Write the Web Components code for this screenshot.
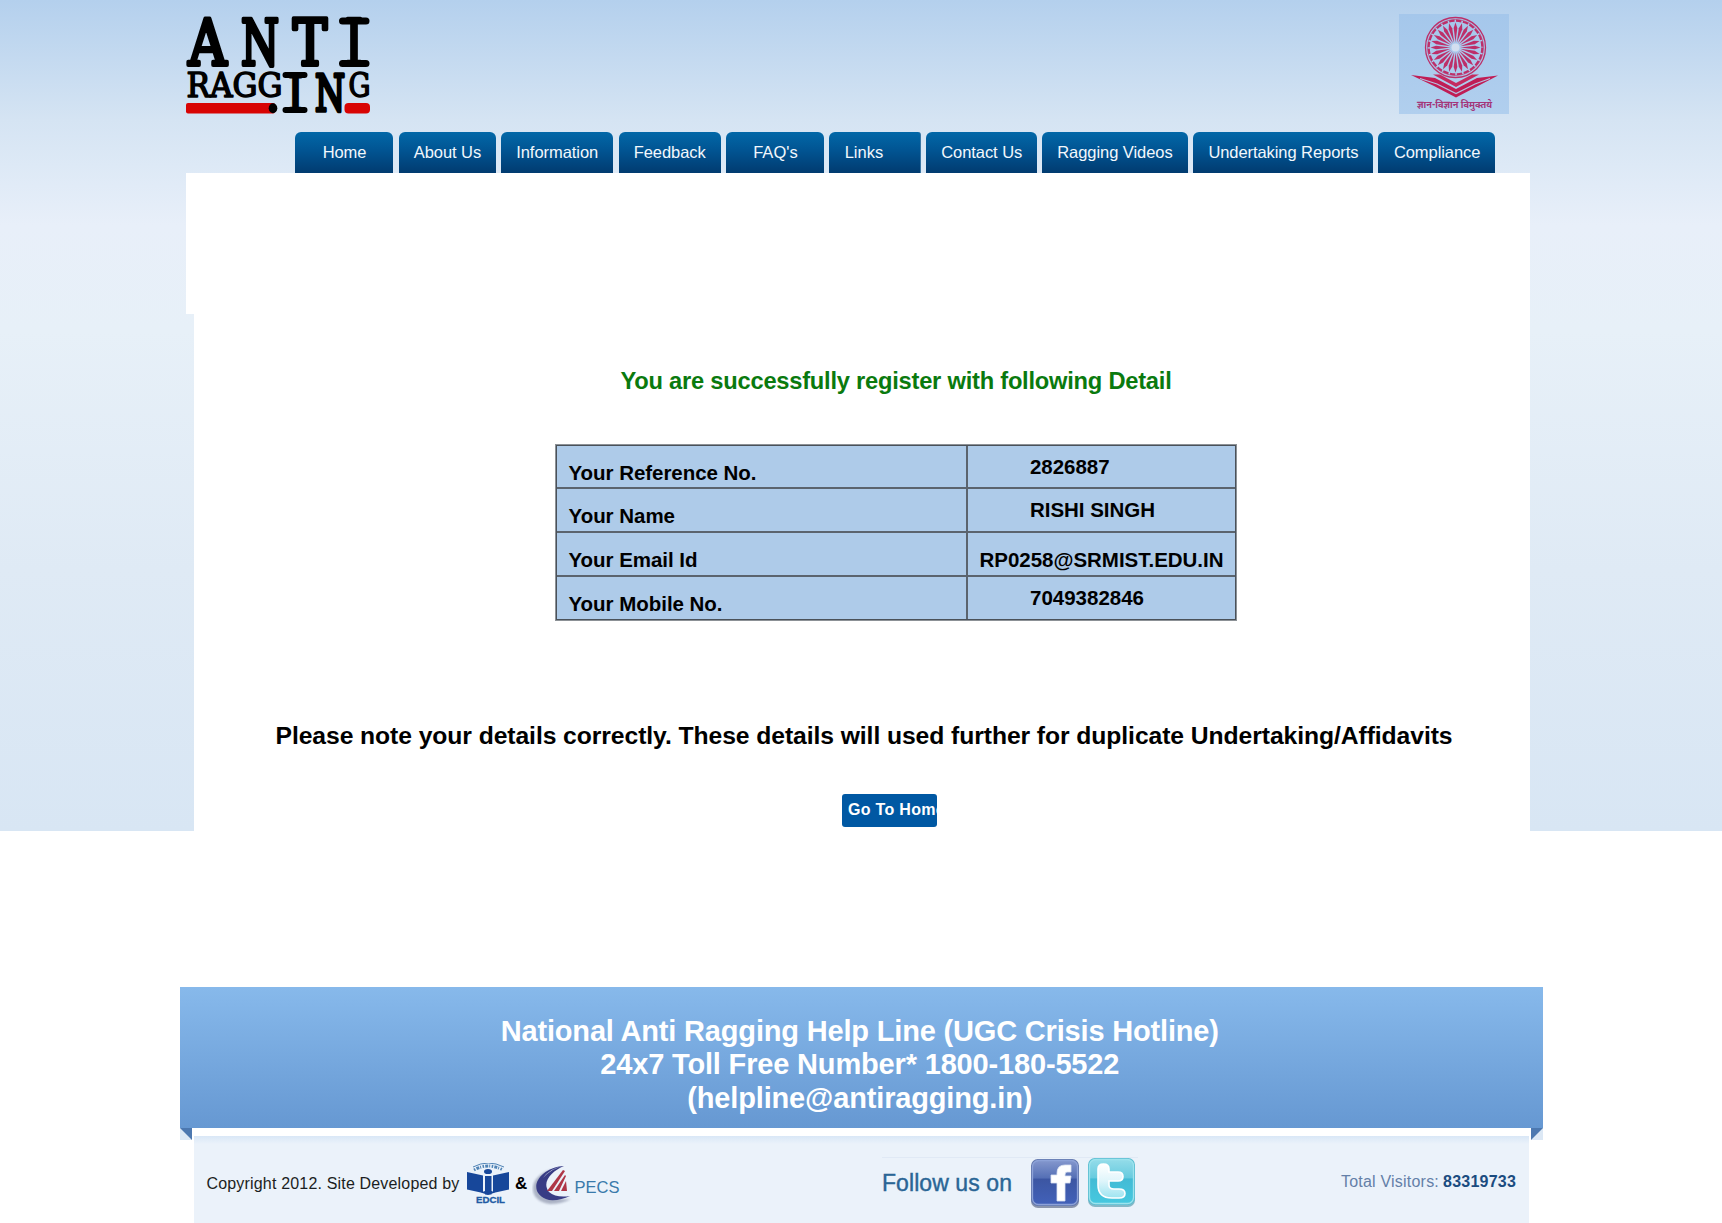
<!DOCTYPE html>
<html lang="en">
<head>
<meta charset="utf-8">
<title>Anti Ragging</title>
<style>
body{margin:0;background:#fff;font-family:"Liberation Sans",Arial,sans-serif;width:1722px;height:1223px;overflow:hidden}
</style>
</head>
<body>
<anti-ragging-page></anti-ragging-page>
<script>
const define=(name,html,init)=>customElements.define(name,class extends HTMLElement{
  connectedCallback(){
    if(this.shadowRoot)return;
    this.attachShadow({mode:'open'}).innerHTML=html;
    if(init)init(this,this.shadowRoot);
  }
});

define('anti-ragging-page',`
<style>
:host{display:flex;flex-direction:column;height:1223px}
.sky{height:831px;background:linear-gradient(#b4d0ed 0,#d5e4f3 120px,#dde9f6 165px,#e8eff9 225px,#e7f0f8 330px,#dfeaf5 570px,#d8e6f4 831px);display:flex;flex-direction:column}
page-help{margin:156px 0 0 180px}
</style>
<div class="sky"><page-header></page-header><page-nav></page-nav><page-content></page-content></div>
<page-help></page-help>
<page-footer></page-footer>`);

define('page-header',`
<style>:host{display:flex;justify-content:space-between;height:132px;padding:0 213.500px 0 180px;box-sizing:border-box}
ugc-logo{margin-top:14px}</style>
<site-logo></site-logo><ugc-logo></ugc-logo>`);

define('site-logo',`
<style>:host{display:block;width:200px;height:125px}svg{display:block}
text{font-family:"DejaVu Serif Condensed","DejaVu Serif",serif;font-stretch:condensed;stroke:#000;stroke-linejoin:round}</style>
<svg width="200" height="125" viewBox="180 0 200 125">
<text y="64.500" font-size="63" stroke-width="4"><tspan x="188.500" textLength="38" lengthAdjust="spacingAndGlyphs">A</tspan><tspan x="241" textLength="38" lengthAdjust="spacingAndGlyphs">N</tspan><tspan x="293" textLength="34" lengthAdjust="spacingAndGlyphs">T</tspan><tspan x="345" textLength="18" lengthAdjust="spacingAndGlyphs">I</tspan></text>
<path d="M342.500 21H366M342.500 63.500H366" stroke="#000" stroke-width="7" stroke-linecap="round"/>
<text y="97.300" font-size="34" stroke-width="1.500"><tspan x="186.500" textLength="96" lengthAdjust="spacingAndGlyphs">RAGG</tspan></text>
<text y="110.500" font-size="50" stroke-width="3.500"><tspan x="288" textLength="15" lengthAdjust="spacingAndGlyphs">I</tspan><tspan x="315" textLength="30" lengthAdjust="spacingAndGlyphs">N</tspan></text>
<path d="M285.500 75H304.500M285.500 110H304.500" stroke="#000" stroke-width="6" stroke-linecap="round"/>
<text y="97.300" font-size="34" stroke-width="1.500"><tspan x="348.500" textLength="22" lengthAdjust="spacingAndGlyphs">G</tspan></text>
<rect x="186" y="103" width="89" height="10.500" rx="2" fill="#d80404"/><rect x="344.500" y="103" width="25.500" height="10.500" rx="4" fill="#d80404"/>
<ellipse cx="273" cy="108.300" rx="4.300" ry="5"/>
</svg>`);

define('ugc-logo',`
<style>:host{display:block;width:110px;height:100px}svg{display:block}</style>
<svg width="110" height="100" viewBox="0 0 110 100">
<defs><linearGradient id="b" x2="0" y2="1"><stop stop-color="#a5c7eb"/><stop offset="1" stop-color="#b1cfee"/></linearGradient></defs>
<rect width="110" height="100" fill="url(#b)"/>
<g fill="none" stroke="#bd2f69"><circle cx="56.500" cy="33.500" r="30" stroke-width="1.300"/><circle cx="56.500" cy="33.500" r="26.800" stroke-width="2.200" stroke-dasharray="5.500 1.500"/><circle cx="56.500" cy="33.500" r="28" stroke-width=".6"/></g>
<g id="s" fill="#bd2f69"></g><circle cx="56.500" cy="33.500" r="4" fill="#d3def0"/>
<path d="M12 61 36 64 57 75 78 64 99 61.500 79 72 57 83.500 35 72Z" fill="#c01d55"/>
<path d="M34 60.500 41 60.500 57 69 73 60.500 80 60.500 57 73Z" fill="#c42a60"/>
<path d="M21 64.500 38 70 57 79.500 76 70 91 64.500" fill="none" stroke="#b4c3e3" stroke-width="1.200"/>
<text x="18" y="94" font-size="10" font-weight="700" font-family="'Noto Sans Devanagari','Noto Sans',sans-serif" fill="#a33579" textLength="75" lengthAdjust="spacingAndGlyphs">ज्ञान-विज्ञान विमुक्तये</text>
</svg>`,(h,r)=>{
  let p='';
  for(let i=0;i<24;i++)p+=`<path d="M56.500 28.500 54.700 14 56.500 8.500 58.300 14Z" transform="rotate(${i*15} 56.500 33.500)"/>`;
  r.getElementById('s').innerHTML=p;
});

define('page-nav',`
<style>:host{display:flex;height:41px;padding-left:295.200px;font-size:16.500px}
nav-tab+nav-tab{margin-left:5.500px}</style>
<nav-tab w="98" p="27.500" t="43.500">Home</nav-tab><nav-tab w="97" p="15" t="67.500">About Us</nav-tab><nav-tab w="112" p="15" t="82">Information</nav-tab><nav-tab w="102" p="15" t="72">Feedback</nav-tab><nav-tab w="98" p="27.500" t="44.500" style="margin-left:5px">FAQ's</nav-tab><nav-tab w="91.500" p="15.500" t="38.500">Links</nav-tab><nav-tab w="111" p="15.500" t="81" style="margin-left:5px">Contact Us</nav-tab><nav-tab w="146" p="15.500" t="115.500" style="margin-left:5px">Ragging Videos</nav-tab><nav-tab w="180" p="15.500" t="150" style="margin-left:5.200px">Undertaking Reports</nav-tab><nav-tab w="116.500" p="15.500" t="86.500">Compliance</nav-tab>`);

define('nav-tab',`
<style>:host{display:flex;box-sizing:border-box;height:41px;border-radius:6px 6px 0 0;background:linear-gradient(#0268a8,#015492 45%,#013b70);color:#f2f8fd;line-height:41px}
:host([w="91.500"]){border-right:1px solid #3c77a5;border-top-right-radius:3px}</style>
<fit-line><slot></slot></fit-line>`,(h,r)=>{
  h.style.width=h.getAttribute('w')+'px';
  h.style.paddingLeft=h.getAttribute('p')+'px';
  const f=r.querySelector('fit-line');
  f.setAttribute('width',h.getAttribute('t'));
  f.setAttribute('chars',h.textContent.length);
});

define('page-content',`
<style>
:host{display:flex;flex-direction:column;width:1344px;height:658px;margin-left:186px}
.top{height:141px;background:#fff}
.main{flex:1;margin-left:7.500px;background:#fff;display:flex;flex-direction:column;align-items:flex-start;font-weight:700}
.ok{font-size:23.700px;line-height:30px;color:#0a7a0e;margin:52px 0 0 427px}
detail-table{margin:48px 0 0 361.500px}
.note{font-size:24.700px;line-height:30px;margin:100px 0 0 82px}
button-link{margin:43px 0 0 648px}
</style>
<div class="top"></div>
<div class="main">
<fit-line class="ok" width="551">You are successfully register with following Detail</fit-line>
<detail-table></detail-table>
<fit-line class="note" width="1177">Please note your details correctly. These details will used further for duplicate Undertaking/Affidavits</fit-line>
<button-link>Go To Home</button-link>
</div>`);

define('detail-table',`
<style>
:host{display:block;box-sizing:border-box;width:682px;height:177px;border:1px solid #8c9196;background:#aecbe9;font-size:20.500px}
.in{height:175px;box-sizing:border-box;border:1px solid #4a5159;display:grid;grid-template-columns:411px 1fr;grid-template-rows:43px 44px 44px 1fr;line-height:24px}
.in>div{padding:15px 0 0 11.500px;border-bottom:2px solid #5b646e}
.in>div:nth-child(odd){border-right:2px solid #5b646e}
.in>div.v{padding:9px 0 0 62px}
.in>div.e{padding:15px 0 0 11.500px}
.in>div:nth-last-child(-n+2){border-bottom:0}
</style>
<div class="in">
<div><fit-line width="188">Your Reference No.</fit-line></div><div class="v"><fit-line width="79.500">2826887</fit-line></div>
<div><fit-line width="106.500">Your Name</fit-line></div><div class="v"><fit-line width="125">RISHI SINGH</fit-line></div>
<div><fit-line width="129">Your Email Id</fit-line></div><div class="e"><fit-line width="244">RP0258@SRMIST.EDU.IN</fit-line></div>
<div><fit-line width="154">Your Mobile No.</fit-line></div><div class="v"><fit-line width="114">7049382846</fit-line></div>
</div>`);

define('button-link',`
<style>:host{display:block;box-sizing:border-box;width:95.500px;height:33px;border-radius:3px;background:#0058a3;color:#fff;font-size:16px;line-height:31px;padding-left:6.500px;overflow:hidden}</style>
<fit-line width="97" chars="10"><slot></slot></fit-line>`);

define('page-help',`
<style>
:host{display:block;width:1363px;height:152px}
.banner{height:141px;box-sizing:border-box;background:linear-gradient(#87b9eb,#6698d2);color:#fff;font-size:29px;font-weight:700;line-height:33.700px;display:flex;flex-direction:column;align-items:center;padding:27.500px 3.500px 0 0}
.folds{display:flex;justify-content:space-between}
svg{display:block}
</style>
<div class="banner"><fit-line width="718">National Anti Ragging Help Line (UGC Crisis Hotline)</fit-line><fit-line width="519">24x7 Toll Free Number* 1800-180-5522</fit-line><fit-line width="345">(helpline@antiragging.in)</fit-line></div>
<div class="folds"><svg width="12" height="12"><path d="M0 0H12V12H0Z" fill="#dce8f5"/><path d="M0 0H12V12Z" fill="#4c78b0"/></svg><svg width="12" height="12"><path d="M0 0H12V12H0Z" fill="#dce8f5"/><path d="M0 0H12L0 12Z" fill="#4c78b0"/></svg></div>`);

define('page-footer',`
<style>
:host{display:flex;box-sizing:border-box;width:1335.500px;height:88px;margin:-3px 0 0 193.500px;background:linear-gradient(#d9e7f6,#ebf2fa 8px);font-size:16px;color:#1b1e22;flex:none}
.copy{margin:38px 0 0 13px;line-height:20px}
edcil-logo{margin:27px 0 0 7px}
.amp{margin:38px 0 0 6.500px;font-weight:700;font-size:17px;line-height:20px;color:#000}
pecs-logo{margin:30px 0 0 6px}
.follow{width:256px;margin:21px 0 0 262px;border-top:1px solid #e0e9f5;height:55px;display:flex;box-sizing:border-box}
.ft{color:#2a6595;font-size:23px;line-height:28px;margin:11px 0 0;-webkit-text-stroke:.4px #2a6595}
svg{display:block;flex:none}
.vis{margin:36px 0 0 203px;line-height:20px;color:#6480a8}
.n{margin:36px 0 0 4px;line-height:20px;color:#1b4c80;font-weight:700}
</style>
<fit-line class="copy" width="253">Copyright 2012. Site Developed by</fit-line>
<edcil-logo></edcil-logo>
<fit-line class="amp" width="11">&amp;</fit-line>
<pecs-logo></pecs-logo>
<div class="follow"><fit-line class="ft" width="130">Follow us on</fit-line><social-icons></social-icons></div>
<fit-line class="vis" width="98">Total Visitors:</fit-line><fit-line class="n" width="73">83319733</fit-line>`);

define('edcil-logo',`
<style>:host{display:block;width:42px;height:44px}svg{display:block}</style>
<svg width="42" height="44" viewBox="0 0 42 44">
<path d="M6 7Q21-1 37 7" fill="none" stroke="#4f83b5" stroke-width="1" transform="translate(0 -3)"/><path d="M7 7Q21-1 36 7" fill="none" stroke="#4f83b5" stroke-width="3" stroke-dasharray="1.500 1.200 3 1 1 1.500"/>
<path d="M0 9 16 12.500V30L0 26.500ZM42 9 26 12.500V30L42 26.500Z" fill="#17479a"/>
<ellipse cx="21" cy="8.500" rx="4" ry="2.600" fill="#17479a"/><path d="M18 13H24.500V31.500H18Z" fill="#17479a"/><path d="M14 29.500 18 28H24.500L28 29.500 21 32Z" fill="#17479a"/>
<text x="9" y="40" font-size="9.500" font-weight="700" font-family="Liberation Sans" fill="#215aa3" stroke="#215aa3" stroke-width=".3" textLength="29" lengthAdjust="spacingAndGlyphs">EDCIL</text>
</svg>`);

define('pecs-logo',`
<style>:host{display:block;width:88px;height:44px}svg{display:block}</style>
<svg width="88" height="44" viewBox="0 0 88 44">
<defs><filter id="f" x="-20%" y="-20%" width="140%" height="140%"><feGaussianBlur stdDeviation="1.300"/></filter></defs>
<path d="M23 3C-4 7-7 35 18 38Q30 38 39 33Q24 34 17 30C6 22 12 8 23 3Z" fill="#8991a8" opacity=".65" filter="url(#f)"/>
<path d="M32 0C4 2-6 28 17 34Q28 35 38 30Q24 32 17 26C9 16 20 5 32 0Z" fill="#383c85"/>
<path d="M32 0Q18 2 11 12Q20 2 32 0Z" fill="#c9d0e5"/>
<g fill="#ae3546"><path d="M31 4 33 5 20 25H15Z"/><path d="M33 9 34 10 27 25H22Z"/><path d="M34 15 35 25H29Z"/></g>
<text x="42.500" y="27" font-size="17" font-family="Liberation Sans" fill="#397aab" textLength="45" lengthAdjust="spacingAndGlyphs">PECS</text>
</svg>`);

define('social-icons',`
<style>:host{display:block;margin-left:18px}svg{display:block}</style>
<svg width="110" height="54" viewBox="0 0 110 54">
<defs><linearGradient id="a" x2="0" y2="1"><stop stop-color="#8497cd"/><stop offset=".4" stop-color="#546fb5"/><stop offset=".42" stop-color="#3c56a2"/><stop offset="1" stop-color="#4261b9"/></linearGradient>
<linearGradient id="c" x2="0" y2="1"><stop stop-color="#94dce9"/><stop offset=".42" stop-color="#67cbdf"/><stop offset=".44" stop-color="#43bbd5"/><stop offset="1" stop-color="#46c8df"/></linearGradient>
<linearGradient id="d" x2="0" y2="1"><stop stop-color="#fff"/><stop offset=".5" stop-color="#dff5fb"/><stop offset="1" stop-color="#9de4f0"/></linearGradient></defs>
<rect x="1" y="3" width="48" height="47" rx="7" fill="#8a95ac"/>
<rect x="1" y="1" width="48" height="47" rx="7" fill="#6277ad"/><rect x="2.500" y="2.500" width="45" height="44" rx="6" fill="url(#a)" stroke="#8da2d8" stroke-width="1.300"/>
<path d="M27 43V25H21V17H27V15Q27 7 35 7H41V14H37Q35 14 35 17V18H41L40 25H35V43Z" fill="#fff" stroke="#dce3f3" stroke-width=".8"/>
<rect x="58" y="3" width="47" height="46" rx="7" fill="#85b8c7"/>
<rect x="58" y="0" width="47" height="47" rx="7" fill="#5bbdd0"/><rect x="59.500" y="1.500" width="44" height="44" rx="6" fill="url(#c)" stroke="#9ce3ed" stroke-width="1.300"/>
<path d="M68 11Q68 6 73.500 6Q79 6 79 11V14H88Q93 14 93 18.500Q93 23 88 23H79V27Q79 31 84 31H89Q95 31 95 35.500Q95 40 89 40H82Q68 40 68 27Z" fill="url(#d)" stroke="#fff" stroke-width="1.600"/>
</svg>`);

// Keeps a line of text at a set width by spreading the difference over its letters.
define('fit-line',`<style>:host{display:block;white-space:nowrap;flex:none}span{display:inline-block}</style><span><slot></slot></span>`,(h,r)=>{
  const s=r.querySelector('span'),target=+h.getAttribute('width');
  const n=+(h.getAttribute('chars')||h.textContent.trim().length);
  s.style.letterSpacing=((target-s.getBoundingClientRect().width)/n)+'px';
  h.style.width=target+'px';
});
</script>
</body>
</html>
